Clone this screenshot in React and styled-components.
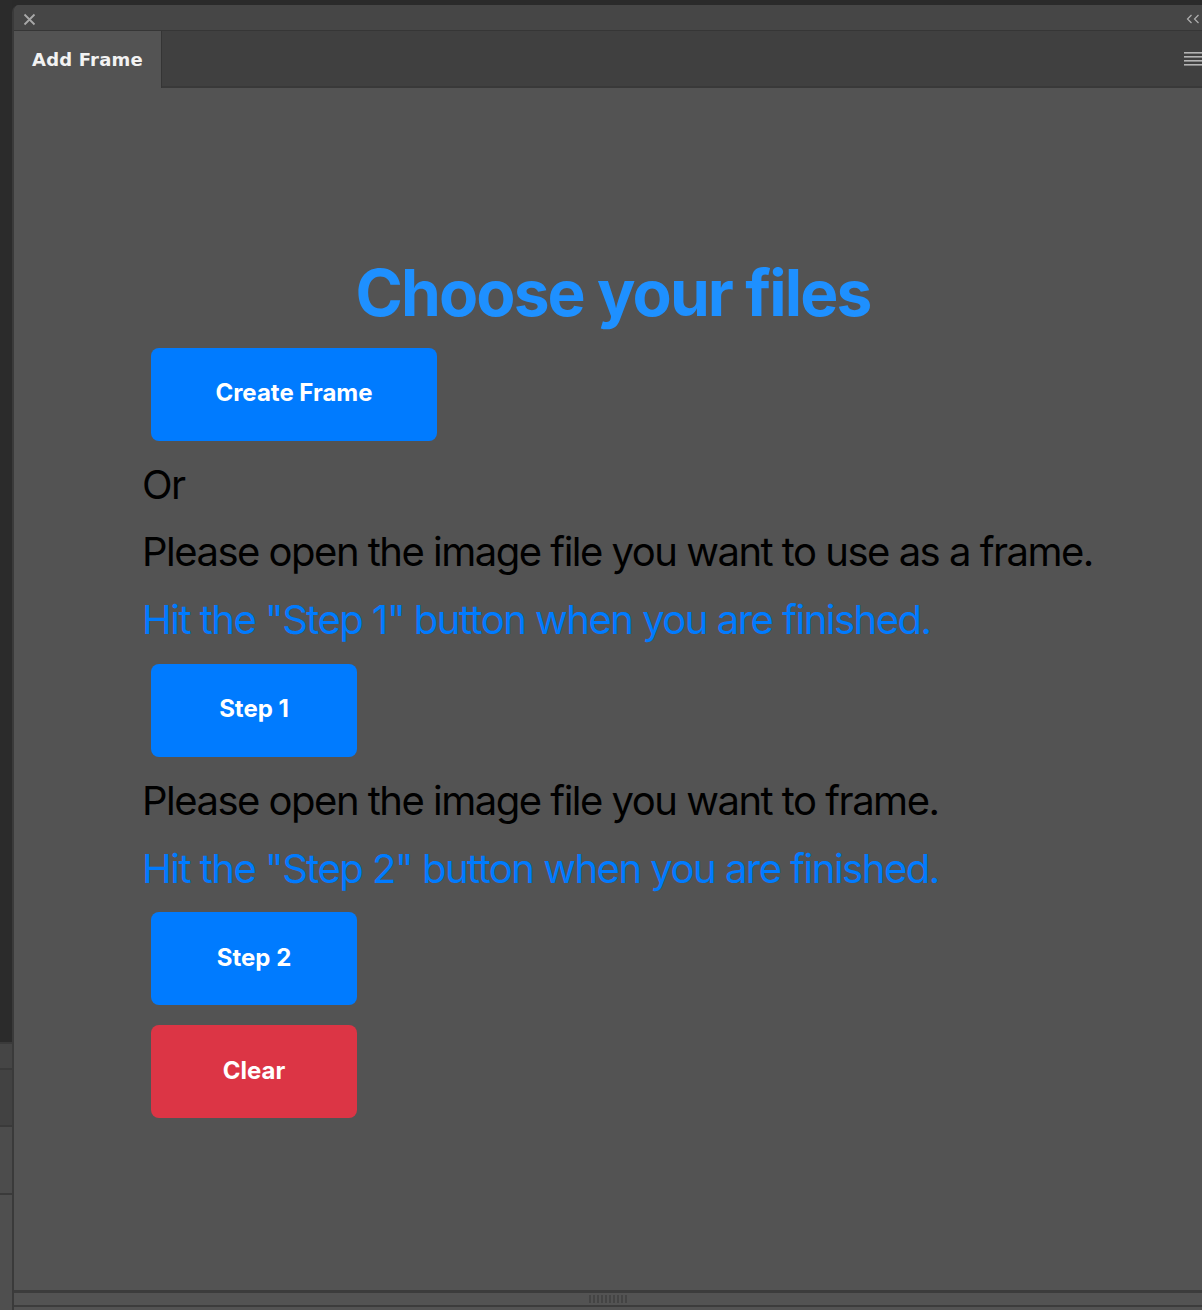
import React from 'react';
import styled, { createGlobalStyle } from 'styled-components';

const GlobalStyle = createGlobalStyle`
  html, body {
    margin: 0;
    padding: 0;
    background: #2a2a2a;
  }
  body {
    font-family: Inter, "Noto Sans", "Liberation Sans", sans-serif;
  }
`;

const Screen = styled.div`
  display: flex;
  height: 1310px;
  overflow: hidden;
`;

const Dock = styled.div`
  width: 12px;
  flex: 0 0 12px;
  display: flex;
  flex-direction: column;
`;

const DockPiece = styled.div`
  height: ${props => props.h || 'auto'};
  flex: ${props => (props.h ? '0 0 auto' : '1')};
  background: ${props => props.bg};
  border-bottom: ${props => (props.line ? '2px solid #3a3a3a' : 'none')};
`;

const Panel = styled.div`
  flex: 1;
  margin-top: 5px;
  display: flex;
  flex-direction: column;
  background: #535353;
  border-left: 2px solid #3a3a3a;
  border-top-left-radius: 7px;
  overflow: hidden;
`;

const TitleBar = styled.div`
  height: 26px;
  flex: 0 0 26px;
  box-sizing: border-box;
  background: #464646;
  border-bottom: 1px solid #363636;
  display: flex;
  align-items: center;
  justify-content: space-between;
  padding: 3px 0 0 9px;
`;

const TabBar = styled.div`
  height: 55px;
  flex: 0 0 55px;
  display: flex;
  background: #404040;
  border-bottom: 2px solid #393939;
`;

const Tab = styled.div`
  width: 148px;
  margin-bottom: -2px;
  background: #535353;
  border-right: 1px solid #353535;
  display: flex;
  align-items: center;
  padding-left: 18px;
  box-sizing: border-box;
  color: #f2f2f2;
  font-family: "DejaVu Sans", "Liberation Sans", sans-serif;
  font-weight: bold;
  font-size: 18px;
  letter-spacing: 0.2px;
`;

const TabFill = styled.div`
  flex: 1;
  display: flex;
  align-items: center;
  justify-content: flex-end;
`;

const Content = styled.main`
  flex: 1;
  display: flex;
  flex-direction: column;
  align-items: flex-start;
  gap: 19.8px;
  padding: 166px 0 0 128px;
`;

const Heading = styled.h1`
  align-self: stretch;
  margin: 0 0 -4px -128px;
  padding-left: 10px;
  text-align: center;
  color: #1e90ff;
  font-size: 64px;
  line-height: 78px;
  font-weight: 700;
  letter-spacing: -1.9px;
`;

const Line = styled.p`
  margin: 0;
  color: ${props => props.color || '#000'};
  font-size: 40px;
  line-height: 48px;
  font-weight: 400;
  letter-spacing: -1.5px;
  white-space: nowrap;
`;

const Button = styled.button`
  margin-left: 9px;
  width: ${props => props.w || '206px'};
  height: 93px;
  padding: 0 0 3px;
  border: none;
  border-radius: 8px;
  background: ${props => (props.danger ? '#dc3545' : '#007bff')};
  color: #fff;
  font-family: Inter, "Noto Sans", sans-serif;
  font-size: 24px;
  font-weight: 700;
  cursor: pointer;
`;

const Footer = styled.div`
  flex: 0 0 20px;
  height: 20px;
  border-top: 3px solid #3c3c3c;
  box-sizing: border-box;
  display: flex;
  flex-direction: column;
`;

const Grip = styled.div`
  height: 12px;
  display: flex;
  justify-content: center;
  align-items: center;
  border-bottom: 2px solid #3c3c3c;
`;

const GripTick = styled.span`
  width: 2px;
  height: 8px;
  margin: 0 1px;
  background: #444;
`;

const CloseIcon = () => (
  <svg width="13" height="13" viewBox="0 0 13 13">
    <path d="M1.5 1.5 L11.5 11.5 M11.5 1.5 L1.5 11.5" stroke="#a8a8a8" strokeWidth="1.8" />
  </svg>
);

const CollapseIcon = () => (
  <svg width="16" height="12" viewBox="0 0 16 12">
    <path d="M5.5 2 L1.5 6 L5.5 10 M12.5 2 L8.5 6 L12.5 10" stroke="#b0b0b0" strokeWidth="1.2" fill="none" />
  </svg>
);

const MenuIcon = () => (
  <svg width="18" height="14" viewBox="0 0 18 14">
    {[1, 5, 9, 13].map(y => (
      <rect key={y} x="0" y={y - 1} width="18" height="1.6" fill="#b4b4b4" />
    ))}
  </svg>
);

export default function App() {
  return (
    <Screen>
      <GlobalStyle />
      <Dock>
        <DockPiece h="1042px" bg="#2b2b2b" line />
        <DockPiece h="24px" bg="#454545" line />
        <DockPiece h="55px" bg="#424242" line />
        <DockPiece h="66px" bg="#4c4c4c" line />
        <DockPiece bg="#4f4f4f" />
      </Dock>
      <Panel>
        <TitleBar>
          <CloseIcon />
          <CollapseIcon />
        </TitleBar>
        <TabBar>
          <Tab>Add Frame</Tab>
          <TabFill>
            <MenuIcon />
          </TabFill>
        </TabBar>
        <Content>
          <Heading>Choose your files</Heading>
          <Button w="286px">Create Frame</Button>
          <Line>Or</Line>
          <Line>Please open the image file you want to use as a frame.</Line>
          <Line color="#007bff">Hit the "Step 1" button when you are finished.</Line>
          <Button>Step 1</Button>
          <Line>Please open the image file you want to frame.</Line>
          <Line color="#007bff">Hit the "Step 2" button when you are finished.</Line>
          <Button>Step 2</Button>
          <Button danger>Clear</Button>
        </Content>
        <Footer>
          <Grip>
            {Array.from({ length: 10 }).map((_, i) => (
              <GripTick key={i} />
            ))}
          </Grip>
        </Footer>
      </Panel>
    </Screen>
  );
}
